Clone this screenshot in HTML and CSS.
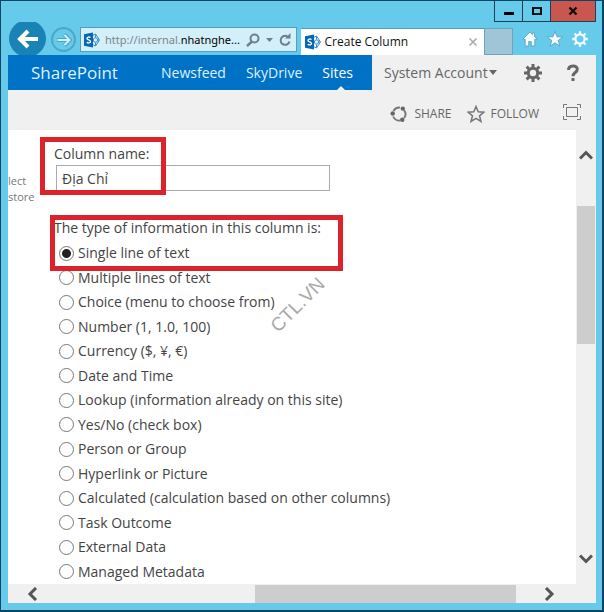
FILE: index.html
```html
<!DOCTYPE html>
<html lang="en">
<head>
    <meta charset="utf-8">
    <title>Create Column</title>
    <link rel="stylesheet" href="styles.css">
</head>
<body>
<svg class="defs" width="0" height="0" aria-hidden="true">
    <symbol id="sp-logo" viewBox="0 0 16 16">
        <path d="M8.500 3.500l3-1.500 4 6-4 6-3-1.500M9 8h6M11.500 2.500v3M11.500 10.500v3" fill="none" stroke="#3b8dc9" stroke-width="1"/>
        <circle cx="11.500" cy="8" r="2.200" fill="#dff0fa" stroke="#3b8dc9"/>
        <path d="M0 2.200L9 .5v15L0 13.800z" fill="#0668b3"/>
        <path d="M6.500 5.500C5 4.700 3 4.900 3 6.400c0 1.800 3.500 1.300 3.500 3.100 0 1.600-2.200 1.700-3.800.9" fill="none" stroke="#fff" stroke-width="1.400"/>
    </symbol>
    <symbol id="gear" viewBox="0 0 18 18">
        <circle cx="9" cy="9" r="4.700" fill="none" stroke="currentColor" stroke-width="3"/>
        <path d="M9 0v4M9 14v4M0 9h4M14 9h4M2.600 2.600l2.900 2.900M12.500 12.500l2.900 2.900M2.600 15.400l2.900-2.900M12.500 5.500l2.900-2.900" stroke="currentColor" stroke-width="3"/>
    </symbol>
</svg>

<div class="window">
    <div class="titlebar">
        <button class="win-btn" aria-label="Minimize"><svg width="12" height="12"><path d="M1 7h10v3H1z"/></svg></button>
        <button class="win-btn" aria-label="Maximize"><svg width="12" height="12"><path d="M2 3h8v6H2z" fill="none" stroke="#111" stroke-width="2"/></svg></button>
        <button class="win-btn close" aria-label="Close"><svg width="12" height="12"><path d="M2.500 2.500l7 7M9.500 2.500l-7 7" stroke="#111" stroke-width="2.400"/></svg></button>
    </div>

    <div class="toolbar">
        <button class="back" aria-label="Back"><svg width="24" height="24" viewBox="0 0 24 24"><path d="M22 12H4M12 4l-8 8 8 8" fill="none" stroke="#fff" stroke-width="4"/></svg></button>
        <button class="forward" aria-label="Forward"><svg width="16" height="16" viewBox="0 0 16 16"><path d="M1 8h13M8.500 2.500L14 8l-5.500 5.500" fill="none" stroke="#4fa6c8" stroke-width="4"/><path d="M1.500 8H13M8.500 3l5 5-5 5" fill="none" stroke="#c9f0fb" stroke-width="2"/></svg></button>
        <div class="address">
            <svg class="logo"><use href="#sp-logo"/></svg>
            <span class="url">http://internal.<b>nhatnghe...</b></span>
            <button aria-label="Search"><svg width="14" height="14"><circle cx="8.500" cy="5.500" r="4" fill="none" stroke="#6d7f88" stroke-width="2"/><path d="M6 8.500L1 13" stroke="#6d7f88" stroke-width="2.400"/></svg></button>
            <button class="drop" aria-label="Show address list"><svg width="7" height="14"><path d="M0 5h7L3.500 9z" fill="#6d7f88"/></svg></button>
            <button aria-label="Refresh"><svg width="13" height="14"><path d="M10.500 8.500A4.500 4.500 0 1 1 8.500 3.500" fill="none" stroke="#6d7f88" stroke-width="2"/><path d="M6 5.500h5.500V0z" fill="#6d7f88"/></svg></button>
        </div>
        <div class="tab">
            <svg class="logo"><use href="#sp-logo"/></svg>
            <span class="tab-title">Create Column</span>
            <button aria-label="Close tab"><svg width="10" height="10"><path d="M1.500 1.500l7 7M8.500 1.500l-7 7" stroke="#aaa" stroke-width="1.600"/></svg></button>
        </div>
        <button class="new-tab" aria-label="New tab"></button>
        <div class="tools">
            <button aria-label="Home"><svg width="16" height="16" viewBox="0 0 16 16"><path d="M8 1L.8 8.200h2.400V15h3.500v-4.500h2.600V15h3.500V8.200h2.400L12.500 5.500V2h-2v1.500z" fill="#f4fdff" stroke="#4d93b0" stroke-width=".7"/></svg></button>
            <button aria-label="Favorites"><svg width="16" height="16" viewBox="0 0 16 16"><path d="M8 .5l2 5.300 5.700.2-4.500 3.500L12.800 15 8 11.800 3.200 15l1.600-5.500L.3 6l5.700-.2z" fill="#f4fdff" stroke="#4d93b0" stroke-width=".7"/></svg></button>
            <button aria-label="Tools"><svg class="ie-gear" width="16" height="16" viewBox="0 0 18 18"><circle cx="9" cy="9" r="5.200" fill="none" stroke="currentColor" stroke-width="2.400"/><path d="M9 .3v3M9 14.700v3M.3 9h3M14.700 9h3M2.800 2.800L5 5M13 13l2.200 2.200M2.800 15.200L5 13M13 5l2.200-2.200" stroke="currentColor" stroke-width="2.600"/></svg></button>
        </div>
    </div>

    <div class="page">
        <header class="suite-bar">
            <nav class="suite-nav">
                <a class="brand" href="#">SharePoint</a>
                <a href="#">Newsfeed</a>
                <a href="#">SkyDrive</a>
                <a class="current" href="#">Sites</a>
            </nav>
            <div class="suite-user">
                <button class="account">System Account<svg width="8" height="5"><path d="M0 0h8L4 5z" fill="#666"/></svg></button>
                <button aria-label="Settings"><svg width="18" height="18"><use href="#gear"/></svg></button>
                <button class="help" aria-label="Help"><svg width="14" height="18" viewBox="0 0 14 18"><path d="M2.500 6C2.500 1 11.300.8 11.300 5.200 11.300 8.500 7 8.500 7 12.200" fill="none" stroke="#666" stroke-width="3"/><path d="M5.500 14h3v3h-3z" fill="#666"/></svg></button>
            </div>
        </header>

        <div class="ribbon">
            <button><svg width="18" height="18" viewBox="0 0 18 18"><path d="M3.500 6A6.500 6.500 0 0 1 10 2.600M14 5.200A6.500 6.500 0 0 1 14.200 13M10.500 15.400A6.500 6.500 0 0 1 3.200 11.500" fill="none" stroke="#777" stroke-width="1.900"/><circle cx="2.700" cy="8.500" r="2.200" fill="#666"/><circle cx="12.800" cy="3.600" r="2.200" fill="#666"/><circle cx="12.300" cy="14.800" r="2.200" fill="#666"/></svg>SHARE</button>
            <button><svg width="18" height="18" viewBox="0 0 18 18"><path d="M9 1.500l2.200 5.300 5.800.4-4.500 3.600 1.500 5.700L9 13.400l-5 3.100 1.500-5.700L1 7.200l5.800-.4z" fill="none" stroke="#777" stroke-width="1.500"/></svg>FOLLOW</button>
            <button class="focus" aria-label="Focus on content"><svg width="18" height="16"><path d="M.5 4V.5H4M14 .5h3.500V4M17.500 12v3.500H14M4 15.500H.5V12M3.500 3.500h11v9h-11z" fill="none" stroke="#777"/></svg></button>
        </div>

        <div class="pane">
            <aside class="hint">lect<br>store</aside>
            <form class="content">
                <div class="field">
                    <label for="columnName">Column name:</label>
                    <input type="text" id="columnName" value="Địa Chỉ">
                    <div class="mark mark-name"></div>
                </div>
                <fieldset class="types">
                    <legend>The type of information in this column is:</legend>
                    <label><input type="radio" name="type" checked>Single line of text</label>
                    <label><input type="radio" name="type">Multiple lines of text</label>
                    <label><input type="radio" name="type">Choice (menu to choose from)</label>
                    <label><input type="radio" name="type">Number (1, 1.0, 100)</label>
                    <label><input type="radio" name="type">Currency ($, ¥, €)</label>
                    <label><input type="radio" name="type">Date and Time</label>
                    <label><input type="radio" name="type">Lookup (information already on this site)</label>
                    <label><input type="radio" name="type">Yes/No (check box)</label>
                    <label><input type="radio" name="type">Person or Group</label>
                    <label><input type="radio" name="type">Hyperlink or Picture</label>
                    <label><input type="radio" name="type">Calculated (calculation based on other columns)</label>
                    <label><input type="radio" name="type">Task Outcome</label>
                    <label><input type="radio" name="type">External Data</label>
                    <label><input type="radio" name="type">Managed Metadata</label>
                    <div class="mark mark-type"></div>
                </fieldset>
                <div class="watermark">CTL.VN</div>
            </form>
            <div class="vscroll">
                <button aria-label="Scroll up"><svg width="14" height="10"><path d="M1 8.500l6-6 6 6" fill="none" stroke="#555" stroke-width="3"/></svg></button>
                <div class="vthumb"></div>
                <button aria-label="Scroll down"><svg width="14" height="10"><path d="M1 1.500l6 6 6-6" fill="none" stroke="#555" stroke-width="3"/></svg></button>
            </div>
        </div>

        <div class="hscroll">
            <button aria-label="Scroll left"><svg width="12" height="14"><path d="M10 1L4 7l6 6" fill="none" stroke="#555" stroke-width="3"/></svg></button>
            <div class="hthumb"></div>
            <button aria-label="Scroll right"><svg width="12" height="14"><path d="M2 1l6 6-6 6" fill="none" stroke="#555" stroke-width="3"/></svg></button>
        </div>
    </div>
</div>
</body>
</html>
```

FILE: styles.css
```css
* { box-sizing: border-box; }
body { margin: 0; font: 14px/20px "Open Sans", "Noto Sans", sans-serif; color: #444; }
button { margin: 0; padding: 0; border: none; background: none; font: inherit; color: inherit; cursor: pointer; display: flex; align-items: center; justify-content: center; }
a { color: inherit; text-decoration: none; }
svg { display: block; flex: none; }
.defs { position: absolute; }

/* browser window */
.window { display: flex; flex-direction: column; min-height: 100vh; padding: 0 6px 7px 7px; background: #66caea; border: 1px solid #0b4565; border-right-width: 2px; border-bottom-width: 2px; }
.titlebar { display: flex; justify-content: flex-end; height: 21px; }
.win-btn { width: 28px; border: 1px solid #1d4052; border-top: none; border-right: none; }
.win-btn.close { width: 46px; background: #c9574f; border-right: 1px solid #1d4052; }

.toolbar { display: flex; align-items: flex-end; height: 33px; overflow: hidden; }
.back { flex: none; align-self: flex-start; width: 37px; height: 37px; margin: -2px 5px 0 1px; border-radius: 50%; background: #1a83b5; }
.forward { flex: none; width: 25px; height: 25px; margin: 0 4px 3px 0; border: 2px solid #4fa6c8; border-radius: 50%; }
.address { flex: 219; min-width: 0; height: 25px; margin: 0 4px 3px 0; padding: 0 4px 0 3px; display: flex; align-items: center; gap: 5px; background: #d3effa; border: 1px solid #5a9db8; }
.address .drop { margin: 0 1px; }
.logo { width: 16px; height: 16px; }
.url { flex: 1; min-width: 0; white-space: nowrap; font-family: "Noto Sans", sans-serif; font-size: 11px; color: #7d868a; }
.url b { font-weight: normal; color: #000; }
.tab { flex: 183; min-width: 0; height: 27px; padding: 0 6px 0 4px; display: flex; align-items: center; gap: 4px; background: #fff; border-top: 1px solid #5a9db8; font-size: 12px; color: #111; }
.tab-title { flex: 1; white-space: nowrap; }
.new-tab { flex: none; width: 29px; height: 27px; background: #9fc5d6; border: 1px solid #6fa3b9; }
.tools { flex: none; display: flex; gap: 9px; margin: 0 8px 8px 9px; }
.ie-gear { color: #f4fdff; }

.page { flex: 1; display: flex; flex-direction: column; background: #fff; }

/* suite bar */
.suite-bar { display: flex; height: 35px; background: #f0f0f0; font-size: 14px; }
.suite-nav { flex: 1; display: flex; align-items: center; gap: 20px; padding-right: 19px; background: #0072c6; color: #dff1ff; }
.suite-nav .brand { flex: 1; padding-left: 23px; font-size: 17px; }
.suite-nav .current { position: relative; color: #fff; line-height: 35px; }
.current::after { content: ""; position: absolute; left: 50%; bottom: 0; margin-left: -1px; border: 4px solid transparent; border-top: none; border-bottom-color: #f0f0f0; }
.suite-user { flex: none; width: 224px; display: flex; align-items: center; padding: 0 16px 0 12px; color: #666; }
.account { gap: 1px; margin-right: auto; white-space: nowrap; font-size: 14px; }
.help { margin-left: 24px; }

.ribbon { display: flex; justify-content: flex-end; align-items: center; gap: 15px; height: 40px; padding: 7px 15px 0 0; background: #f0f0f0; font-size: 12px; color: #666; }
.ribbon button { gap: 6px; }
.ribbon .focus { margin: 0 0 4px 9px; }

/* column form */
.pane { flex: 1; display: flex; }
.hint { width: 46px; padding-top: 43px; font-size: 11px; line-height: 16px; color: #777; }
.content { flex: 1; display: flex; flex-direction: column; position: relative; }
.field { position: relative; padding-top: 14px; }
.field label { display: block; }
.field input { display: block; width: 274px; height: 26px; margin: 1px 0 0 2px; padding: 0 5px; border: 1px solid #ababab; font: inherit; color: #444; }
.types { flex: 1; position: relative; display: flex; flex-direction: column; justify-content: space-between; margin: 27px 0 0; padding: 5px 0 2px 5px; border: none; min-width: 0; }
.types legend { margin-left: -5px; padding: 0; }
.types label { display: flex; align-items: center; gap: 4px; height: 20px; white-space: nowrap; }
.types input { appearance: none; width: 15px; height: 15px; margin: 0; border: 1px solid #777; border-radius: 50%; background: #fff; }
.types input:checked { background: radial-gradient(circle, #222 4px, #fff 5px); }

/* highlight boxes */
.mark { position: absolute; border: 5px solid #dc232b; pointer-events: none; }
.mark-name { left: -14px; top: 7px; width: 126px; height: 58px; }
.mark-type { left: -4px; top: -23px; width: 293px; height: 56px; }
.watermark { position: absolute; left: 210px; top: 163px; font: 19px/24px "Liberation Sans", sans-serif; color: #aaa; transform: rotate(-45deg); pointer-events: none; }

/* scrollbars */
.vscroll { width: 20px; padding: 19px 0; display: flex; flex-direction: column; background: #f0f0f0; }
.vscroll button { height: 12px; }
.vthumb { height: 138px; margin: 45px 1px auto; background: #cdcdcd; }
.hscroll { display: flex; align-items: center; height: 19px; padding: 0 40px 0 18px; background: #f0f0f0; }
.hthumb { width: 261px; height: 18px; margin: 0 0 0 auto; background: #cdcdcd; }
.hscroll button:last-child { margin-left: 28px; }
```
